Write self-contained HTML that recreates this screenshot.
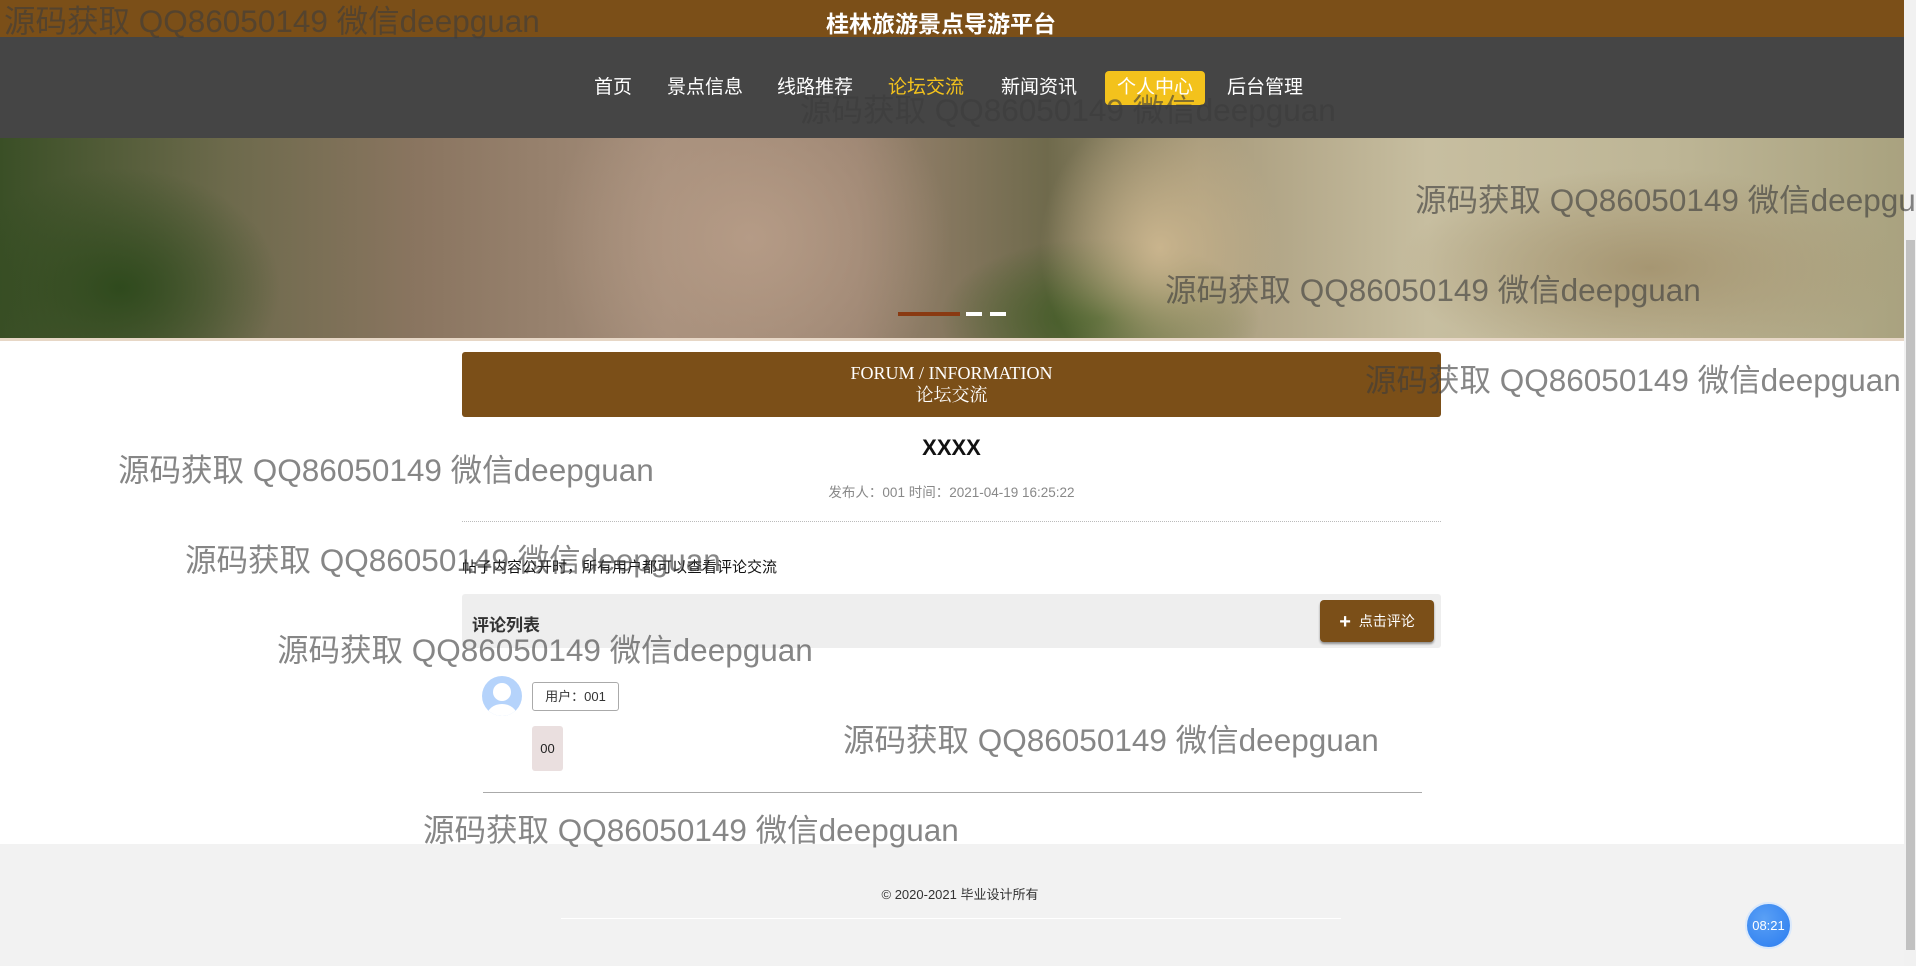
<!DOCTYPE html>
<html><head><meta charset="utf-8">
<style>
*{margin:0;padding:0;box-sizing:border-box}
html,body{width:1916px;height:966px;overflow:hidden;background:#fff;font-family:"Liberation Sans","Noto Sans CJK SC",sans-serif;position:relative}
.abs{position:absolute}
.top{left:0;top:0;width:1904px;height:37px;background:#7b4f18;box-shadow:0 2px 3px rgba(0,0,0,.4)}
.title{left:0;width:1882px;top:5px;text-align:center;color:#fff;font-size:23px;font-weight:bold}
.nav{left:0;top:37px;width:1904px;height:101px;background:#454545}
.ni{top:74px;color:#fff;font-size:19px;height:30px;line-height:28px;white-space:nowrap}
.banner{left:0;top:138px;width:1904px;height:203px;overflow:hidden;
background:
radial-gradient(ellipse 160px 120px at 120px 150px,#2f4a1d 0%,rgba(47,74,29,0) 100%),
radial-gradient(ellipse 200px 180px at 750px 100px,#b59b86 0%,rgba(181,155,134,0) 100%),
radial-gradient(ellipse 120px 140px at 1160px 110px,#c9b48d 0%,rgba(201,180,141,0) 100%),
radial-gradient(ellipse 160px 80px at 1100px 180px,#3d5a22 0%,rgba(61,90,34,0) 100%),
radial-gradient(ellipse 250px 100px at 1650px 130px,#a69672 0%,rgba(166,150,114,0) 100%),
linear-gradient(90deg,#3a4f26 0%,#6d6a4c 12%,#8a7560 22%,#a48d7a 35%,#9a8370 45%,#6f6a4c 55%,#a89b7c 63%,#c7bea0 75%,#bdb595 88%,#a9a27f 100%);}
.banner::after{content:"";position:absolute;left:0;right:0;bottom:0;height:3px;background:#e7d7c6}
.hdr{left:462px;top:352px;width:979px;height:65px;background:#7b4f18;border-radius:3px;color:#fff;text-align:center;font-family:"Liberation Serif","Noto Serif CJK SC",serif;font-size:18px;line-height:22px;padding-top:10px}
.wm{color:rgba(60,60,60,.62);font-size:31.5px;white-space:nowrap;font-family:"Liberation Sans","Noto Sans CJK SC",sans-serif;line-height:1}
</style></head><body>
<div class="abs top"></div>
<div class="abs title">桂林旅游景点导游平台</div>
<div class="abs nav"></div>
<div class="abs ni" style="left:594px">首页</div>
<div class="abs ni" style="left:667px">景点信息</div>
<div class="abs ni" style="left:777px">线路推荐</div>
<div class="abs ni" style="left:888px;color:#f3c21c">论坛交流</div>
<div class="abs ni" style="left:1001px">新闻资讯</div>
<div class="abs ni" style="left:1105px;top:71px;width:100px;height:34px;line-height:34px;background:#f3c21c;border-radius:4px;text-align:center">个人中心</div>
<div class="abs ni" style="left:1227px">后台管理</div>
<div class="abs banner"></div>
<div class="abs" style="left:898px;top:312px;width:62px;height:4px;background:#8a3a12"></div>
<div class="abs" style="left:966px;top:312px;width:16px;height:4px;background:#fff"></div>
<div class="abs" style="left:990px;top:312px;width:16px;height:4px;background:#fff"></div>
<div class="abs" style="left:1904px;top:0;width:12px;height:966px;background:#f1f1f1"></div>
<div class="abs" style="left:1906px;top:240px;width:9px;height:710px;background:#c1c1c1"></div>

<div class="abs hdr">FORUM / INFORMATION<br>论坛交流</div>
<div class="abs" style="left:462px;width:979px;top:435px;text-align:center;font-size:22px;font-weight:bold;color:#111">XXXX</div>
<div class="abs" style="left:462px;width:979px;top:481px;text-align:center;font-size:13.5px;color:#888">发布人：001 时间：2021-04-19 16:25:22</div>
<div class="abs" style="left:462px;top:521px;width:979px;border-top:1px dotted #bbb"></div>
<div class="abs" style="left:462px;top:556px;font-size:15px;color:#111">帖子内容公开时，所有用户都可以查看评论交流</div>
<div class="abs" style="left:462px;top:594px;width:979px;height:54px;background:#eee;border-radius:3px"></div>
<div class="abs" style="left:472px;top:611px;font-size:17px;font-weight:bold;color:#333">评论列表</div>
<div class="abs" style="left:1320px;top:600px;width:114px;height:42px;background:#7b4f18;border-radius:4px;box-shadow:0 2px 2px rgba(0,0,0,.4);color:#fff;font-size:14px;line-height:42px;text-align:center"><b style="font-size:20px;vertical-align:-2px">+</b>&nbsp; 点击评论</div>
<svg class="abs" style="left:482px;top:676px" width="40" height="40" viewBox="0 0 40 40"><defs><clipPath id="c"><circle cx="20" cy="20" r="20"/></clipPath></defs><circle cx="20" cy="20" r="20" fill="#b5d3fb"/><g clip-path="url(#c)" fill="#fff"><circle cx="20" cy="16" r="9"/><ellipse cx="20" cy="40" rx="15" ry="12"/></g></svg>
<div class="abs" style="left:532px;top:682px;width:87px;height:29px;border:1px solid #aaa;border-radius:3px;font-size:13px;line-height:27px;text-align:center;color:#333">用户：001</div>
<div class="abs" style="left:532px;top:726px;width:31px;height:45px;background:#eadfdf;border-radius:3px;font-size:13px;line-height:45px;text-align:center;color:#222">00</div>
<div class="abs" style="left:483px;top:792px;width:939px;border-top:1px solid #aaa"></div>

<div class="abs" style="left:0;top:844px;width:1904px;height:122px;background:#f2f2f2"></div>
<div class="abs" style="left:0;width:1920px;top:884px;text-align:center;font-size:13px;color:#333">© 2020-2021 毕业设计所有</div>
<div class="abs" style="left:561px;top:918px;width:780px;border-top:1px solid #fff"></div>
<div class="abs" style="left:1745px;top:902px;width:47px;height:47px;border-radius:50%;background:radial-gradient(circle at 40% 35%,#5aa0f5,#2a7cf0);border:2px solid #dbe9fb;color:#fff;font-size:13px;line-height:43px;text-align:center">08:21</div>

<div class="abs wm" style="left:4px;top:6px">源码获取 QQ86050149 微信deepguan</div>
<div class="abs wm" style="left:800px;top:95px">源码获取 QQ86050149 微信deepguan</div>
<div class="abs wm" style="left:1415px;top:185px">源码获取 QQ86050149 微信deepguan</div>
<div class="abs wm" style="left:1165px;top:275px">源码获取 QQ86050149 微信deepguan</div>
<div class="abs wm" style="left:1365px;top:365px">源码获取 QQ86050149 微信deepguan</div>
<div class="abs wm" style="left:118px;top:455px">源码获取 QQ86050149 微信deepguan</div>
<div class="abs wm" style="left:185px;top:545px">源码获取 QQ86050149 微信deepguan</div>
<div class="abs wm" style="left:277px;top:635px">源码获取 QQ86050149 微信deepguan</div>
<div class="abs wm" style="left:843px;top:725px">源码获取 QQ86050149 微信deepguan</div>
<div class="abs wm" style="left:423px;top:815px">源码获取 QQ86050149 微信deepguan</div>
</body></html>
